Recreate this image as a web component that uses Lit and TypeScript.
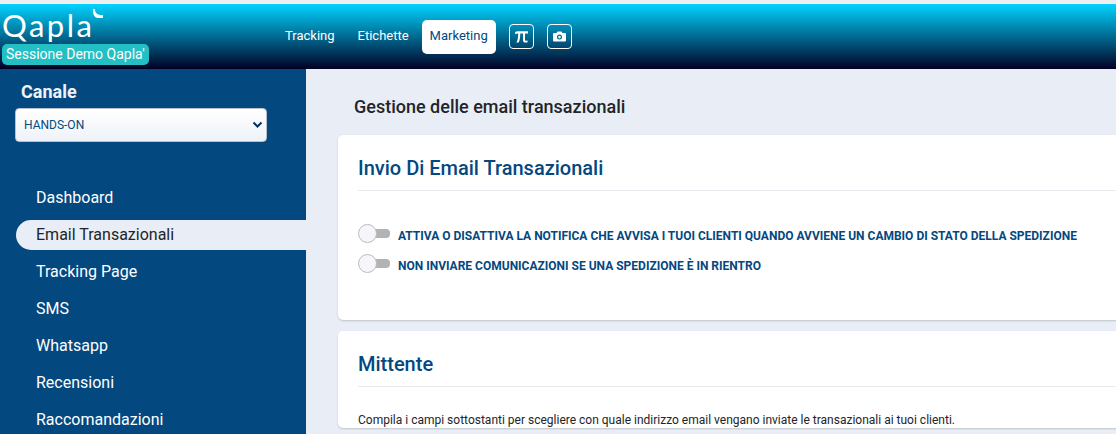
import { LitElement, html, css, svg } from "lit";
import { customElement } from "lit/decorators.js";

const NAV = ["Dashboard", "Email Transazionali", "Tracking Page", "SMS", "Whatsapp", "Recensioni", "Raccomandazioni"];

@customElement("app-root")
export class AppRoot extends LitElement {
  static styles = css`
    :host { display: block; width: 1116px; height: 434px; overflow: hidden; background: #e9eef6; font-family: Roboto, "Liberation Sans", sans-serif; }
    .page { display: flex; flex-direction: column; height: 434px; border-top: 4px solid #eeeeee; box-sizing: border-box; }
    header { height: 65px; flex: none; display: flex; background: linear-gradient(180deg, #00d4ff 0%, #020024 100%); }
    .brand { width: 277px; flex: none; padding: 6px 0 0 2px; box-sizing: border-box; display: flex; flex-direction: column; align-items: flex-start; }
    .logo { display: flex; align-items: flex-start; height: 34px; color: #fff; font-family: Lato, sans-serif; font-size: 31px; line-height: 30px; letter-spacing: 2.5px; }
    .logo svg { margin: -1px 0 0 -1px; }
    .demo { margin-top: 0; background: #22bfc4; color: #fff; font-size: 14px; line-height: 21px; padding: 0 4px; border-radius: 5px; }
    nav.top { display: flex; align-items: center; height: 65px; padding-bottom: 0; }
    .tab { color: #fff; font-size: 13px; padding: 0 8px; height: 34px; line-height: 32px; margin-right: 7px; border-radius: 5px; white-space: nowrap; box-sizing: border-box; }
    .tab.on { background: #fff; color: #03487f; margin-right: 13px; margin-left: -2px; }
    .ico { width: 25px; height: 25px; border: 1px solid #fff; border-radius: 4px; display: flex; align-items: center; justify-content: center; margin-right: 13px; box-sizing: border-box; color: #fff; margin-top: -1px; }
    .body { display: flex; flex: 1; min-height: 0; }
    aside { width: 306px; flex: none; background: #03487f; padding: 12px 0 0 15px; box-sizing: border-box; color: #fff; }
    .canale { font-size: 18px; font-weight: 700; line-height: 22px; padding-left: 6px; color: #eef3fa; }
    .sel { margin-top: 5px; width: 252px; height: 34px; background: linear-gradient(180deg, #ffffff, #eef2f8); border: 1px solid #b7c0cb; border-radius: 4px; box-sizing: border-box; display: flex; align-items: center; justify-content: space-between; padding: 0 3px 0 8px; color: #03487f; font-size: 12px; }
    .items { display: flex; flex-direction: column; gap: 7px; margin-top: 41px; margin-left: 1px; }
    .item { height: 30px; line-height: 30px; font-size: 16px; padding-left: 20px; color: #fff; border-radius: 15px 0 0 15px; white-space: nowrap; }
    .item.on { background: #e9eef6; color: #212529; }
    main { flex: 1; min-width: 0; padding: 0 0 0 32px; }
    h1 { margin: 0; font-size: 18px; font-weight: 500; line-height: 22px; color: #212529; padding: 27px 0 17px 16px; }
    .card { background: #fff; border-radius: 5px; box-shadow: 0 1px 2px rgba(0,0,0,.18); margin-bottom: 11px; padding: 0 0 0 20px; width: 800px; box-sizing: border-box; }
    .card h2 { margin: 0; font-size: 20px; font-weight: 500; color: #03487f; line-height: 24px; padding: 21px 0 10px; border-bottom: 1px solid #e7eaee; }
    .sw-list { height: 129px; padding-top: 33px; box-sizing: border-box; display: flex; flex-direction: column; gap: 11px; }
    .row { display: flex; align-items: flex-start; height: 19px; }
    .sw { position: relative; width: 32px; height: 19px; flex: none; margin-right: 8px; }
    .track { position: absolute; left: 10px; top: 5px; width: 22px; height: 9px; background: #b3b3b3; border-radius: 0 4px 4px 0; }
    .knob { position: absolute; left: 0; top: 0; width: 17px; height: 17px; background: #f4f6fa; border: 1px solid #bbbbbb; border-radius: 50%; }
    .lbl { font-size: 12px; font-weight: 700; color: #03487f; line-height: 14px; margin-top: 5px; white-space: nowrap; }
    .desc { margin: 0; padding-top: 25px; font-size: 12px; line-height: 16px; color: #212529; white-space: nowrap; }
  `;

  render() {
    return html`<div class="page">
      <header>
        <div class="brand">
          <div class="logo">Qapla<svg width="12" height="10" viewBox="0 0 12 10">${svg`<path d="M2 0 C2 4 4 6 10 6 L10 9 L5 9 C2 9 0 6 0 2 L0 0 Z" fill="#fff"/>`}</svg></div>
          <div class="demo">Sessione Demo Qapla'</div>
        </div>
        <nav class="top">
          <div class="tab">Tracking</div>
          <div class="tab">Etichette</div>
          <div class="tab on">Marketing</div>
          <div class="ico"><svg width="15" height="15" viewBox="0 0 15 15">${svg`<path d="M1 3.5 C2 2.5 3 2.3 4 2.3 H14 V4.4 H11 V10.5 C11 11.6 11.6 12 13.5 11.6 V13.4 C10.5 14 9 13.2 9 11 V4.4 H6.2 C6.2 8 6 11 4.6 13.6 H2.4 C3.8 11 4.2 8 4.2 4.4 C3 4.4 2 4.6 1.4 5.2 Z" fill="#fff"/>`}</svg></div>
          <div class="ico"><svg width="13" height="11" viewBox="0 0 13 11">${svg`<path fill-rule="evenodd" d="M1 2 H3.5 L4.5 .5 H8.5 L9.5 2 H12 A1 1 0 0 1 13 3 V9.5 A1 1 0 0 1 12 10.5 H1 A1 1 0 0 1 0 9.5 V3 A1 1 0 0 1 1 2 Z M6.5 3.6 A2.5 2.5 0 1 0 6.5 8.6 A2.5 2.5 0 1 0 6.5 3.6 Z M6.5 4.8 A1.3 1.3 0 1 1 6.5 7.4 A1.3 1.3 0 1 1 6.5 4.8 Z" fill="#fff"/>`}</svg></div>
        </nav>
      </header>
      <div class="body">
        <aside>
          <div class="canale">Canale</div>
          <div class="sel"><span>HANDS-ON</span><svg width="11" height="8" viewBox="0 0 11 8">${svg`<path d="M1.5 1.5 L5.5 5.5 L9.5 1.5" fill="none" stroke="#03345c" stroke-width="2"/>`}</svg></div>
          <div class="items">${NAV.map((n, i) => html`<div class="item ${i === 1 ? "on" : ""}">${n}</div>`)}</div>
        </aside>
        <main>
          <h1>Gestione delle email transazionali</h1>
          <section class="card">
            <h2>Invio Di Email Transazionali</h2>
            <div class="sw-list">
              <div class="row"><div class="sw"><div class="track"></div><div class="knob"></div></div><div class="lbl">ATTIVA O DISATTIVA LA NOTIFICA CHE AVVISA I TUOI CLIENTI QUANDO AVVIENE UN CAMBIO DI STATO DELLA SPEDIZIONE</div></div>
              <div class="row"><div class="sw"><div class="track"></div><div class="knob"></div></div><div class="lbl">NON INVIARE COMUNICAZIONI SE UNA SPEDIZIONE È IN RIENTRO</div></div>
            </div>
          </section>
          <section class="card">
            <h2>Mittente</h2>
            <p class="desc">Compila i campi sottostanti per scegliere con quale indirizzo email vengano inviate le transazionali ai tuoi clienti.</p>
          </section>
        </main>
      </div>
    </div>`;
  }
}
